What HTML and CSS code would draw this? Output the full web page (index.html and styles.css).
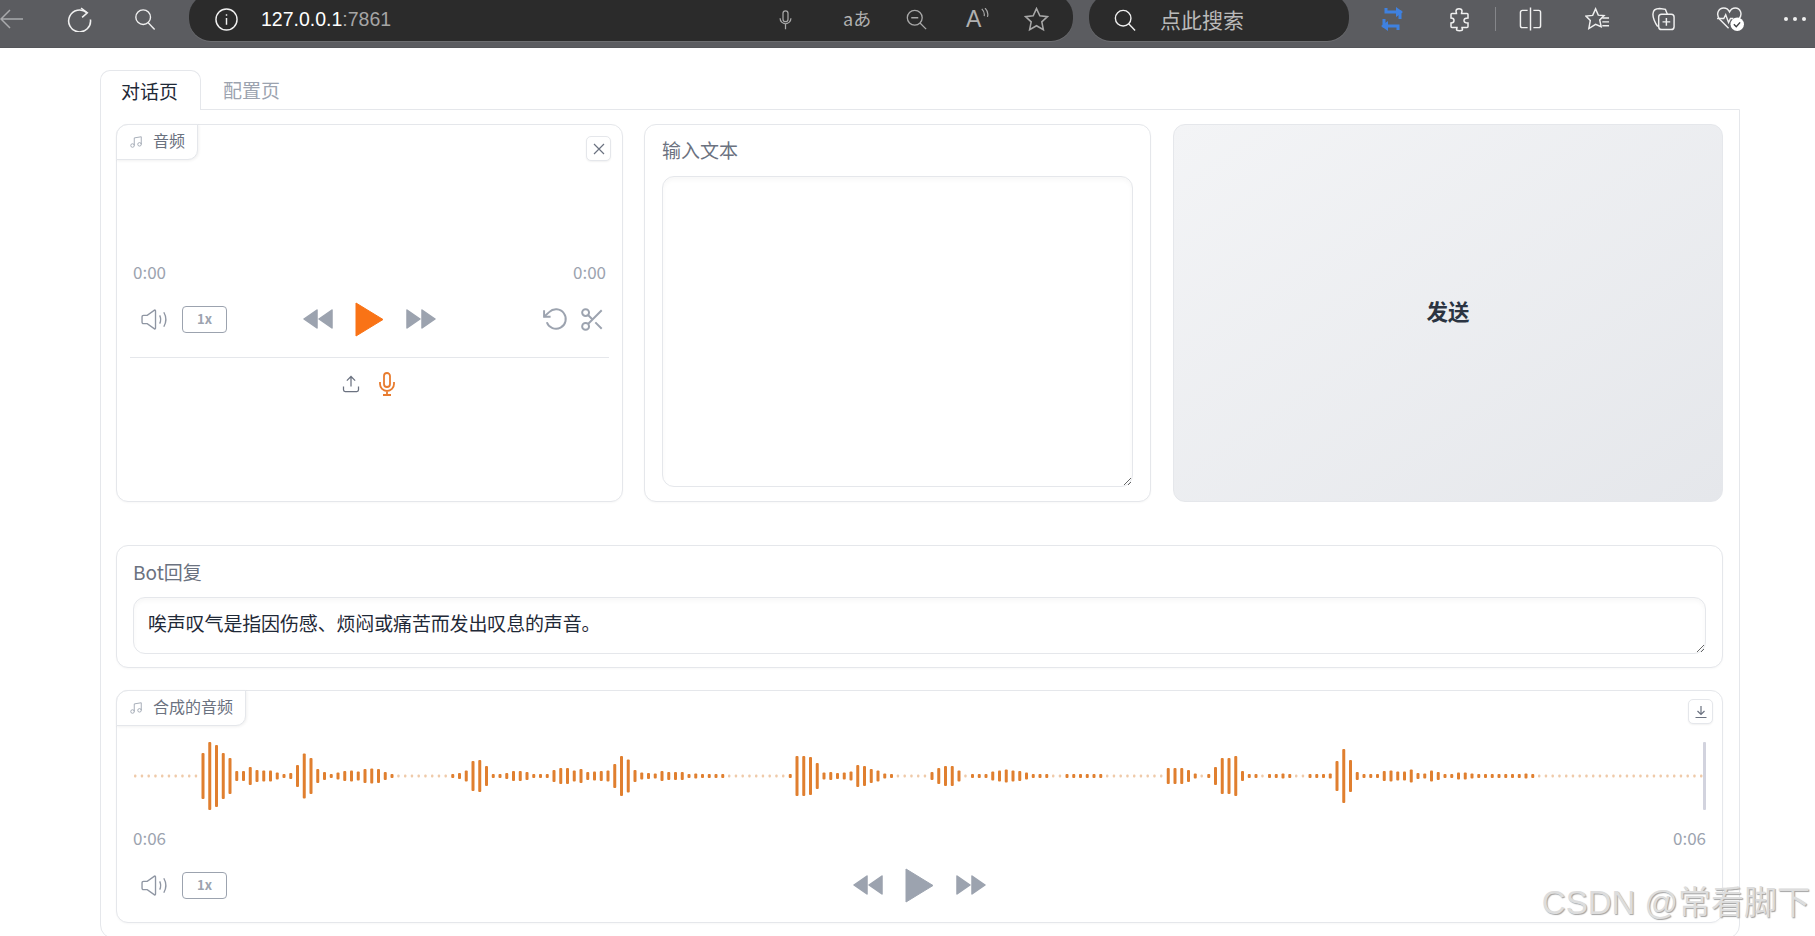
FILE: index.html
```html
<!DOCTYPE html>
<html>
<head>
  <meta charset="utf-8"/>
  <title>127.0.0.1:7861</title>
  <link rel="stylesheet" href="styles.css">
</head>
<body>

<header class="toolbar">
  <svg class="t-back" viewBox="0 0 24 24"><path d="M23 12H1M10 3l-9 9 9 9"/></svg>
  <svg class="t-reload" viewBox="0 0 24 24"><path d="M19 5.500A10.500 10.500 0 1 0 22.500 12"/><path d="M13.500 1l6 4.500-5 4.500"/></svg>
  <svg class="t-search" viewBox="0 0 24 24"><circle cx="10" cy="10" r="8"/><path d="M15.500 16l7 7.500"/></svg>

  <div class="address">
    <svg class="a-info" viewBox="0 0 24 24"><circle cx="12" cy="12" r="11"/><path d="M12 10.500v7M12 6.500v1.500"/></svg>
    <div class="url">127.0.0.1<span class="port">:7861</span></div>
    <svg class="a-mic" viewBox="0 0 16 24"><rect x="5" y="1" width="6" height="13" rx="3"/><path d="M1.500 10a6.500 6.500 0 0 0 13 0M8 16.500V23"/></svg>
    <div class="a-translate">aあ</div>
    <svg class="a-zoom" viewBox="0 0 24 24"><circle cx="10" cy="10" r="8.500"/><path d="M6 10h8M16 16l7 7"/></svg>
    <div class="a-read">A<svg viewBox="0 0 10 16"><path d="M1 1q4 4 3 9M5 0q5 5 3 11"/></svg></div>
    <svg class="a-star" viewBox="0 0 24 24"><path d="M12 1.500l3.200 7 7.300.800-5.400 5 1.500 7.500L12 18l-6.600 3.800 1.500-7.500-5.400-5 7.300-.800z"/></svg>
  </div>

  <div class="search-box">
    <svg class="s-icon" viewBox="0 0 24 24"><circle cx="10" cy="10" r="8.500"/><path d="M16 16l7 7.500"/></svg>
    <div class="s-text">点此搜索</div>
  </div>

  <svg class="t-sync" viewBox="0 0 22 24"><path d="M5 1v4h14v7M17 23v-4H3v-7"/><path class="arrow" d="M15 0l7 5-7 5zM7 14l-7 5 7 5z"/></svg>
  <svg class="t-puzzle" viewBox="0 0 24 24"><path d="M9 3.500C9 .5 15 .5 15 3.500c0 1-.5 1.500-.5 2.500H20c1 0 1 1 1 1v3.500c-2 0-4 0-4 2.500s2 2.500 4 2.500V19s0 1-1 1h-5c0 1 .5 1.500.5 2 0 1.500-6 1.500-6 0 0-.5.500-1 .5-2H5c-1 0-1-1-1-1v-3.500c1.500 0 3 0 3-2.500S5.500 10.500 4 10.500V7s0-1 1-1h4.500C9.500 5 9 4.500 9 3.500z"/></svg>
  <div class="t-divider"></div>
  <svg class="t-split" viewBox="0 0 24 24"><path d="M12 0v24M9 3H3.500A2 2 0 0 0 1.500 5v14a2 2 0 0 0 2 2H9M15 3h5.500a2 2 0 0 1 2 2v14a2 2 0 0 1-2 2H15"/></svg>
  <svg class="t-favs" viewBox="0 0 26 24"><path d="M11 1.500l2.800 6.500 6 .5-4.500 4.500 1.500 7-5.800-2.500L4 22l1.500-8.500L1 9l7-.800z"/><path d="M18 11h7M18 15h7M18 19h7"/></svg>
  <svg class="t-collect" viewBox="0 0 26 24"><path d="M7 20c-2-3-5-9-5-13C2 3 5 1 9 1l6 1 2 5"/><rect x="8" y="7" width="16" height="16" rx="3"/><path d="M16 11v8M12 15h8"/></svg>
  <svg class="t-health" viewBox="0 0 30 26"><path d="M13 22L4 13C-1 7 3 1 8 1c3 0 5 2 6 4 1-2 3-4 6-4 5 0 8 6 4 11"/><path d="M1 12h7l2-4 3 8 2-4h3"/><circle class="badge" cx="22" cy="18" r="7"/><path class="tick" d="M18.500 18l2.500 2.500 4-4.500"/></svg>
  <div class="t-more"><i></i><i></i><i></i></div>
</header>

<main class="page">
  <nav class="tabs">
    <div class="tab active">对话页</div>
    <div class="tab">配置页</div>
  </nav>

  <section class="panel">
    <div class="top-row">
      <div class="card audio-in">
        <div class="audio-label">
          <svg class="note" viewBox="0 0 24 24"><path d="M9 18V5l12-2v13"/><circle cx="6" cy="18" r="3"/><circle cx="18" cy="16" r="3"/></svg>
          <span>音频</span>
        </div>
        <button class="corner-btn"><svg viewBox="0 0 12 12"><path d="M1 1l10 10M11 1L1 11"/></svg></button>

        <div class="times"><span>0:00</span><span>0:00</span></div>
        <div class="controls">
          <div class="c-left">
            <svg class="speaker" viewBox="0 0 27 20"><path d="M1 7.500q0-1.500 1.500-1.500H6l7-5q1-.5 1 1v16q0 1.500-1 1l-7-5H2.500Q1 14 1 12.500z"/><path d="M18 6q2 4 0 8M22 3q4 7 0 14"/></svg>
            <div class="speed">1x</div>
          </div>
          <div class="c-mid">
            <svg class="skip" viewBox="0 0 30 20"><path d="M14 1v18L1 10zM29 1v18L16 10z"/></svg>
            <svg class="play orange" viewBox="0 0 29 35"><path d="M1 1l27 16.500L1 34z"/></svg>
            <svg class="skip" viewBox="0 0 30 20"><path d="M1 1v18l13-9zM16 1v18l13-9z"/></svg>
          </div>
          <div class="c-right">
            <svg class="undo" viewBox="0 0 24 24"><path d="M1 4v6h6"/><path d="M3.510 15a9 9 0 1 0 2.130-9.360L1 10"/></svg>
            <svg class="scissors" viewBox="2 2 20 20"><circle cx="6" cy="6" r="3"/><circle cx="6" cy="18" r="3"/><path d="M20 4L8.120 15.880M14.470 14.480L20 20M8.120 8.120L12 12"/></svg>
          </div>
        </div>
        <div class="rule"></div>
        <div class="sources">
          <svg class="upload" viewBox="0 0 24 24"><path d="M21 15v4a2 2 0 0 1-2 2H5a2 2 0 0 1-2-2v-4"/><path d="M17 8l-5-5-5 5M12 3v12"/></svg>
          <svg class="mic" viewBox="3 0 18 24"><path d="M12 1a3 3 0 0 0-3 3v8a3 3 0 0 0 6 0V4a3 3 0 0 0-3-3z"/><path d="M19 10v2a7 7 0 0 1-14 0v-2M12 19v4M8 23h8"/></svg>
        </div>
      </div>

      <div class="card text-in">
        <div class="field-label">输入文本</div>
        <textarea class="field field-tall"></textarea>
      </div>

      <button class="send">发送</button>
    </div>

    <div class="card reply">
      <div class="field-label">Bot回复</div>
      <textarea class="field field-short" readonly>唉声叹气是指因伤感、烦闷或痛苦而发出叹息的声音。</textarea>
    </div>

    <div class="card audio-out">
      <div class="audio-label">
        <svg class="note" viewBox="0 0 24 24"><path d="M9 18V5l12-2v13"/><circle cx="6" cy="18" r="3"/><circle cx="18" cy="16" r="3"/></svg>
        <span>合成的音频</span>
      </div>
      <button class="corner-btn"><svg viewBox="0 0 14 14"><path d="M7 1v8M3.500 6L7 9.500 10.500 6M1.500 12.500h11"/></svg></button>

      <svg id="wave" class="wave" width="1574" height="68" viewBox="0 0 1574 68"></svg>
      <div class="times"><span>0:06</span><span>0:06</span></div>
      <div class="controls">
        <div class="c-left">
          <svg class="speaker" viewBox="0 0 27 20"><path d="M1 7.500q0-1.500 1.500-1.500H6l7-5q1-.5 1 1v16q0 1.500-1 1l-7-5H2.500Q1 14 1 12.500z"/><path d="M18 6q2 4 0 8M22 3q4 7 0 14"/></svg>
          <div class="speed">1x</div>
        </div>
        <div class="c-mid">
          <svg class="skip" viewBox="0 0 30 20"><path d="M14 1v18L1 10zM29 1v18L16 10z"/></svg>
          <svg class="play" viewBox="0 0 29 35"><path d="M1 1l27 16.500L1 34z"/></svg>
          <svg class="skip" viewBox="0 0 30 20"><path d="M1 1v18l13-9zM16 1v18l13-9z"/></svg>
        </div>
        <div class="c-right"></div>
      </div>
    </div>
  </section>
</main>

<div class="watermark">CSDN @常看脚下</div>

<script src="script.js"></script>
</body>
</html>
```

FILE: styles.css
```css
html, body {
  margin: 0;
  height: 936px;
  overflow: hidden;
}
body {
  background-color: #fff;
  font-family: "Noto Sans CJK SC", "Noto Sans", sans-serif;
  color: #1f2937;
}

/* browser bar */
.toolbar {
  height: 48px;
  box-sizing: border-box;
  background-color: #5b5c60;
  border-bottom: 1px solid #55565a;
  display: flex;
  align-items: center;
  overflow: hidden;
}
.toolbar svg {
  fill: none;
  stroke: #f0f0f0;
  stroke-width: 1.5;
  flex: none;
}
.t-back { width: 24px; height: 24px; margin: -10px 0 0 0; }
.toolbar .t-back { stroke: #a9aaad; }
.t-reload { width: 25px; height: 25px; margin: -9px 0 0 43px; }
.t-search { width: 22px; height: 22px; margin: -9px 0 0 42px; }
.address {
  width: 884px;
  height: 47px;
  margin: -12px 0 0 33px;
  padding-top: 4px;
  box-sizing: border-box;
  flex: none;
  background-color: #2b2b2b;
  border-radius: 22px;
  display: flex;
  align-items: center;
  box-shadow: 0 1px 0 #6c6d70;
}
.a-info { width: 23px; height: 23px; margin-left: 26px; }
.url {
  margin-left: 23px;
  font-family: "Liberation Sans", sans-serif;
  font-size: 19.5px;
  color: #fff;
}
.port { color: #a5a5a5; }
.toolbar .address svg, .toolbar .search-box svg { stroke: #a8a8a8; }
.toolbar .address .a-info, .toolbar .search-box .s-icon { stroke: #f0f0f0; }
.a-mic { width: 15px; height: 20px; margin-left: auto; }
.a-translate { width: 28px; margin: -3px 0 0 50px; font-size: 18px; color: #b0b0b0; white-space: nowrap; }
.a-zoom { width: 21px; height: 21px; margin-left: 35px; }
.a-read {
  width: 25px;
  margin-left: 39px;
  font-family: "Liberation Sans", sans-serif;
  font-size: 23px;
  color: #b0b0b0;
  display: flex;
}
.a-read svg { width: 8px; height: 13px; margin-top: 2px; }
.a-star { width: 25px; height: 25px; margin: 0 24px 0 33px; }
.search-box {
  width: 260px;
  height: 47px;
  margin: -12px 0 0 16px;
  padding-top: 4px;
  box-sizing: border-box;
  flex: none;
  background-color: #2b2b2b;
  border-radius: 22px;
  display: flex;
  align-items: center;
  box-shadow: 0 1px 0 #6c6d70;
}
.s-icon { width: 22px; height: 22px; margin-left: 25px; }
.s-text { margin: -2px 0 0 24px; font-size: 21px; color: #b9b9b9; }
.t-sync { width: 22px; height: 24px; margin: -9px 0 0 32px; }
.toolbar .t-sync { stroke: #3f81e0; stroke-width: 3; }
.toolbar .t-sync .arrow { fill: #3f81e0; stroke: none; }
.t-puzzle { width: 24px; height: 25px; margin: -9px 0 0 44px; }
.t-divider { width: 1px; height: 24px; margin: -9px 0 0 24px; background-color: #85868a; }
.t-split { width: 23px; height: 24px; margin: -9px 0 0 23px; }
.t-favs { width: 25px; height: 24px; margin: -9px 0 0 43px; }
.t-collect { width: 25px; height: 24px; margin: -9px 0 0 41px; }
.t-health { width: 29px; height: 25px; margin: -9px 0 0 40px; }
.toolbar .t-health .badge { fill: #fff; stroke: none; }
.toolbar .t-health .tick { stroke: #3f4044; }
.t-more { display: flex; gap: 5px; margin: -9px 0 0 39px; }
.t-more i { width: 4px; height: 4px; border-radius: 50%; background-color: #f0f0f0; }

/* gradio app */
.page {
  padding: 22px 75px 0 100px;
}
.tabs {
  display: flex;
  height: 39px;
  position: relative;
  z-index: 1;
}
.tab {
  width: 57px;
  padding: 0 23px 0 20px;
  line-height: 40px;
  font-size: 19px;
  color: #9ca3af;
  white-space: nowrap;
}
.tab.active {
  width: 57px;
  height: 39px;
  padding: 0 22px 0 20px;
  border: 1px solid #e5e7eb;
  border-bottom: 0;
  border-radius: 10px 10px 0 0;
  background-color: #fff;
  color: #1f2937;
}
.tab + .tab { padding-left: 22px; }
.panel {
  height: 830px;
  box-sizing: border-box;
  padding: 14px 16px 0 15px;
  border: 1px solid #e5e7eb;
  border-radius: 0 0 14px 14px;
}
.top-row {
  display: grid;
  grid-template-columns: 507px 507px 1fr;
  column-gap: 21px;
  height: 378px;
}
.card {
  position: relative;
  box-sizing: border-box;
  border: 1px solid #e5e7eb;
  border-radius: 12px;
  background-color: #fff;
  box-shadow: 0 1px 2px rgba(0, 0, 0, .03);
}
.audio-label {
  position: absolute;
  top: -1px;
  left: -1px;
  height: 34px;
  padding: 0 12px;
  display: flex;
  align-items: center;
  gap: 10px;
  font-size: 16px;
  color: #6b7280;
  background-color: #fff;
  border: 1px solid #e5e7eb;
  border-radius: 12px 0 10px 0;
  box-shadow: 1px 1px 3px rgba(0, 0, 0, .06);
}
.audio-label span { margin-top: -5px; }
.note {
  width: 14px;
  height: 14px;
  fill: none;
  stroke: #9ca3af;
  stroke-width: 1.500;
}
.corner-btn {
  position: absolute;
  top: 11px;
  right: 11px;
  width: 25px;
  height: 25px;
  padding: 0;
  display: flex;
  align-items: center;
  justify-content: center;
  background-color: #fff;
  border: 1px solid #e5e7eb;
  border-radius: 5px;
  box-shadow: 0 1px 2px rgba(0, 0, 0, .06);
}
.corner-btn svg {
  width: 12px;
  height: 12px;
  fill: none;
  stroke: #6b7280;
  stroke-width: 1.200;
}
.audio-out .corner-btn { top: 8px; right: 9px; }
.audio-out .corner-btn svg { width: 14px; height: 14px; }

.audio-in { padding-top: 137px; }
.audio-in .controls { margin-top: 19px; }
.audio-out { margin-top: 22px; height: 233px; padding-top: 51px; }
.wave { display: block; margin-left: 16px; }
.audio-out .times { margin-top: 18px; }
.audio-out .controls { margin-top: 19px; }

.times {
  display: flex;
  justify-content: space-between;
  padding: 0 16px;
  font-size: 17px;
  line-height: 20px;
  color: #9ca3af;
}
.controls {
  display: grid;
  grid-template-columns: 1fr auto 1fr;
  align-items: center;
  height: 36px;
  padding: 0 18px;
}
.c-left {
  display: flex;
  align-items: center;
  gap: 13px;
  padding-left: 6px;
}
.c-mid {
  display: flex;
  align-items: center;
  gap: 22px;
}
.c-right {
  display: flex;
  align-items: center;
  justify-content: flex-end;
  gap: 12px;
}
.speaker {
  width: 28px;
  height: 21px;
  fill: none;
  stroke: #8f96a3;
  stroke-width: 1.300;
}
.speed {
  width: 43px;
  height: 25px;
  line-height: 23px;
  text-align: center;
  font-size: 13px;
  font-weight: 700;
  color: #9ca3af;
  border: 1px solid #9ca3af;
  border-radius: 4px;
}
.skip { width: 30px; height: 20px; fill: #9ca3af; stroke: #9ca3af; stroke-linejoin: round; stroke-width: 1.500; }
.play { width: 29px; height: 35px; fill: #9ca3af; stroke: #9ca3af; stroke-linejoin: round; }
.play.orange { fill: #f97316; stroke: #f97316; }
.undo { width: 26px; height: 26px; fill: none; stroke: #9ca3af; stroke-width: 1.800; }
.scissors { width: 23px; height: 23px; fill: none; stroke: #9ca3af; stroke-width: 1.700; }
.rule {
  height: 1px;
  margin: 20px 13px 0;
  background-color: #e5e7eb;
}
.sources {
  display: flex;
  justify-content: center;
  align-items: center;
  gap: 17px;
  margin-top: 14px;
  padding-right: 2px;
}
.upload { width: 20px; height: 20px; fill: none; stroke: #6b7280; stroke-width: 1.500; }
.mic { width: 18px; height: 24px; fill: none; stroke: #e87c2f; stroke-width: 1.800; }

.text-in { padding: 12px 17px; }
.reply { margin-top: 43px; height: 123px; padding: 13px 16px; }
.field-label {
  font-size: 19px;
  line-height: 26px;
  color: #6b7280;
}
.field {
  display: block;
  width: 100%;
  box-sizing: border-box;
  margin-top: 12px;
  padding: 12px 14px;
  font-family: inherit;
  font-size: 19px;
  letter-spacing: -.15px;
  line-height: 26px;
  color: #1f2937;
  border: 1px solid #e5e7eb;
  border-radius: 12px;
  outline: 0;
  overflow: hidden;
  box-shadow: inset 0 3px 4px rgba(0, 0, 0, .03);
}
.field-tall { height: 311px; margin-top: 13px; }
.field-short { height: 57px; }
.send {
  margin-left: 1px;
  padding-bottom: 6px;
  border: 1px solid #e5e7eb;
  border-radius: 12px;
  background: linear-gradient(to bottom right, #f3f4f6, #e5e7eb);
  font-family: inherit;
  font-size: 21.500px;
  font-weight: 700;
  color: #2b3442;
}

.watermark {
  position: absolute;
  right: 5px;
  top: 881px;
  font-family: "Liberation Sans", "Noto Sans CJK SC", sans-serif;
  font-size: 33px;
  line-height: 44px;
  color: #dddddd;
  text-shadow: 1px 1px 1px #a3a3a3;
  white-space: nowrap;
}
```

FILE: script.js
```js
// half heights of the waveform bars, 0 = faint dot
var bars = [
  0,0,0,0,0,0,0,0,0,0,
  23,34,31,23,18,5,5,9,6,5.5,5.5,3.5,2,3,11,22.5,18,7,4,2,3.5,5,5.5,4.5,7,7.5,7,4,1.5,
  0,0,0,0,0,0,0,0,
  2,3,5.5,15,16,10,1.5,2,3,5,5,4,1.5,1.5,1.5,6,8,8,5.5,7,4,4.5,5,5.5,12,20,16.5,6,3.5,3,2.5,5,4,4,4,2,2.5,
  1.5,1.5,1.5,1.5,
  0,0,0,0,0,0,0,0,0,
  1.5,20,20,19,13,3.5,4,3,3.5,4.5,11,10,7,5.5,2.5,1.5,
  0,0,0,0,0,
  4,8,10,10,5.5,0,2,1.5,1.5,4.5,5.5,6.5,5.5,5,3.5,1.5,1.5,1.5,0,0,1.5,2,1.5,1.5,1.5,1.5,
  0,0,0,0,0,0,0,0,0,
  8,8,8,6,2.5,0,1.5,9,18,18,20,5,1.5,2,0,1.5,2,2.5,2,0,
  0,2,2,2,2.5,15,27,16,4,1.5,1.5,2,5,5.5,4.5,4.5,6.5,3,2.5,5.5,4,1.5,1.5,3.5,3.5,2.5,1.5,1.5,1,1,1.5,2,2,2.5,1.5,
  0,0,0,0,0,0,0,0,0,0,0,0,0,0,0,0,0,0,0,0,0,0,0,0,0
];

var wave = document.getElementById("wave");
var step = 1566 / (bars.length - 1);
var middle = 34;

function addRect(x, y, w, h, color) {
  let rect = document.createElementNS("http://www.w3.org/2000/svg", "rect");
  rect.setAttribute("x", x);
  rect.setAttribute("y", y);
  rect.setAttribute("width", w);
  rect.setAttribute("height", h);
  rect.setAttribute("rx", 1);
  rect.setAttribute("fill", color);
  wave.appendChild(rect);
}

bars.forEach((half, i) => {
  let x = 1 + i * step;
  if (half == 0) {
    addRect(x, middle - 1.5, 2.4, 3, "#efcaa9");
  } else {
    addRect(x, middle - Math.max(half, 2), 3, Math.max(half, 2) * 2, "#e07f2f");
  }
});

// playhead at the end of the track
addRect(1570, 0, 3, 68, "#d2d3de");
```
